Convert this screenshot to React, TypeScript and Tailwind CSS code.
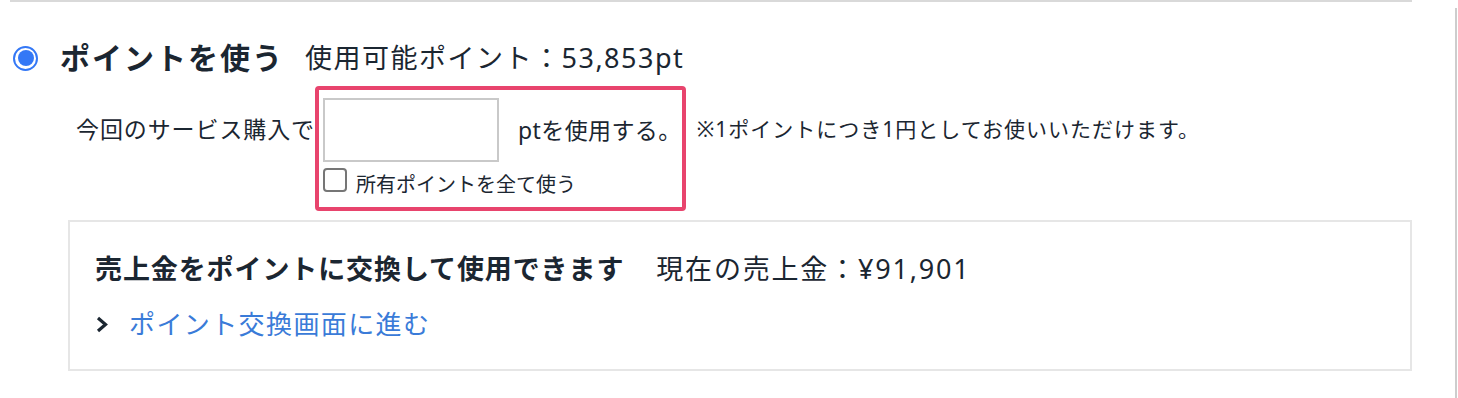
import React from "react";

const FONT = { fontFamily: '"Noto Sans", "Noto Sans CJK JP", sans-serif' };

function Radio() {
  return (
    <span className="flex h-[25px] w-[25px] shrink-0 items-center justify-center rounded-full border-[2.5px] border-[#3478f6] bg-white">
      <span className="h-[16px] w-[16px] rounded-full bg-[#3478f6]" />
    </span>
  );
}

function Chevron() {
  return (
    <svg width="14" height="17" viewBox="0 0 14 17" fill="none" className="shrink-0">
      <path d="M3 2 L10.5 8.5 L3 15" stroke="#1b2631" strokeWidth="3.2" strokeLinejoin="miter" />
    </svg>
  );
}

export default function App() {
  return (
    <div className="flex h-[398px] w-[1458px] overflow-hidden bg-white text-[#1b2631]" style={FONT}>
      <div className="w-[1455px] shrink-0">
        <div className="ml-[10px] h-[2px] w-[1402px] bg-[#d9d9d9]" />

        {/* heading */}
        <div className="mt-[36px] flex h-[40px] items-center pl-[13px]">
          <Radio />
          <span className="ml-[22px] text-[30px] font-bold leading-[40px] tracking-[2px]">ポイントを使う</span>
          <span className="ml-[21px] text-[27px] leading-[40px] tracking-[1.5px]">使用可能ポイント：53,853pt</span>
        </div>

        {/* point input row */}
        <div className="mt-[8px] flex items-start">
          <span className="ml-[76px] mt-[28px] text-[23px] leading-[30px] tracking-[0.9px]">今回のサービス購入で</span>
          <div className="rounded-[4px] border-4 border-[#e8446d] pb-[12px] pl-[4px] pr-0 pt-[8px]">
            <div className="flex items-center">
              <input
                type="text"
                className="h-[64px] w-[176px] border-2 border-[#c9c9c9] bg-white px-2 text-[22px] outline-none"
              />
              <span className="ml-[19px] text-[23px] leading-[30px] tracking-[0.4px]">ptを使用する。</span>
            </div>
            <label className="mt-[6px] flex items-start">
              <span className="h-[24px] w-[24px] shrink-0 rounded-[4px] border-2 border-[#767676] bg-white" />
              <span className="ml-[9px] mt-[7px] text-[20px] leading-[20px]">所有ポイントを全て使う</span>
            </label>
          </div>
          <span className="ml-[11px] mt-[28px] text-[21px] leading-[30px] tracking-[1px]">※1ポイントにつき1円としてお使いいただけます。</span>
        </div>

        {/* sales box */}
        <div className="ml-[68px] mt-[9px] h-[151px] w-[1344px] border-2 border-[#e6e6e6] pl-[25px] pt-[29px]">
          <div className="flex items-center">
            <span className="text-[27px] font-bold leading-[36px] tracking-[0.9px]">売上金をポイントに交換して使用できます</span>
            <span className="ml-[32px] text-[27px] leading-[36px] tracking-[1.8px]">現在の売上金：¥91,901</span>
          </div>
          <div className="mt-[19px] flex h-[36px] items-center">
            <Chevron />
            <a href="#" className="ml-[20px] text-[26px] leading-[36px] tracking-[1.4px] text-[#3a7bd8]">
              ポイント交換画面に進む
            </a>
          </div>
        </div>
      </div>
      <div className="mt-[8px] w-[2px] shrink-0 bg-[#cdcdcd]" />
      <div className="w-[1px] shrink-0" />
    </div>
  );
}
